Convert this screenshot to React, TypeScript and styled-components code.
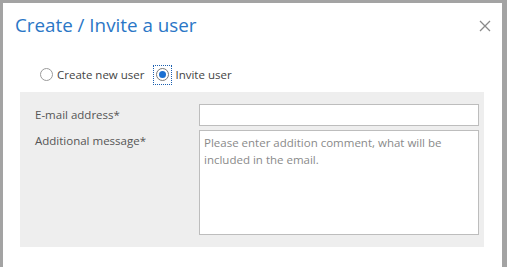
import { createGlobalStyle, styled } from "styled-components";

const GlobalStyle = createGlobalStyle`
    html, body {
        margin: 0;
        padding: 0;
        background: #a3a3a3;
        font-family: "Open Sans", "Noto Sans", sans-serif;
        overflow: hidden;
    }
`;

function App() {
    return (
        <StyledBackdrop>
            <GlobalStyle />
            <StyledDialog>
                <StyledHeader>
                    <StyledTitle>Create / Invite a user</StyledTitle>
                    <StyledClose aria-label="Close">
                        <svg width="12" height="12" viewBox="0 0 12 12">
                            <path d="M1 1 L11 11 M11 1 L1 11" stroke="#8a8a8a" strokeWidth="1.3" fill="none" />
                        </svg>
                    </StyledClose>
                </StyledHeader>
                <StyledRadioRow>
                    <StyledRadioOption>
                        <StyledRadio />
                        <span>Create new user</span>
                    </StyledRadioOption>
                    <StyledRadioOption>
                        <StyledFocus>
                            <StyledRadio $checked />
                        </StyledFocus>
                        <span>Invite user</span>
                    </StyledRadioOption>
                </StyledRadioRow>
                <StyledPanel>
                    <StyledFormRow>
                        <StyledLabel>E-mail address*</StyledLabel>
                        <StyledInput type="text" />
                    </StyledFormRow>
                    <StyledFormRow>
                        <StyledLabel>Additional message*</StyledLabel>
                        <StyledTextArea placeholder="Please enter addition comment, what will be included in the email." />
                    </StyledFormRow>
                </StyledPanel>
            </StyledDialog>
        </StyledBackdrop>
    );
}

const StyledBackdrop = styled.div`
    width: 507px;
    height: 267px;
    padding: 3px 5px 0 3px;
    box-sizing: border-box;
    background: #a3a3a3;
    overflow: hidden;
`;

const StyledDialog = styled.div`
    background: #ffffff;
    height: 264px;
    box-sizing: border-box;
    padding: 0 17px 0 17px;
`;

const StyledHeader = styled.div`
    display: flex;
    justify-content: space-between;
    align-items: center;
    height: 44px;
    margin-left: -5px;
    margin-right: -6px;
`;

const StyledTitle = styled.h1`
    margin: 0;
    font-size: 18.8px;
    font-weight: 400;
    color: #2a76c6;
`;

const StyledClose = styled.button`
    border: none;
    background: none;
    padding: 0;
    display: flex;
    margin-top: 1px;
`;

const StyledRadioRow = styled.div`
    display: flex;
    align-items: center;
    gap: 9px;
    padding: 13px 0 0 20px;
    height: 29px;
    font-size: 11.5px;
    color: #444;
`;

const StyledRadioOption = styled.label`
    display: flex;
    align-items: center;
    gap: 4px;
`;

const StyledFocus = styled.span`
    display: flex;
    padding: 2px 2px 3px 2px;
    outline: 1px dotted #1a5fb0;
    margin-left: 1px;
`;

const StyledRadio = styled.span<{ $checked?: boolean }>`
    width: 11px;
    height: 11px;
    border-radius: 50%;
    border: 1px solid ${(p) => (p.$checked ? "#7a7a7a" : "#9a9a9a")};
    background: #fff;
    display: flex;
    align-items: center;
    justify-content: center;

    &::after {
        content: "";
        width: 7px;
        height: 7px;
        border-radius: 50%;
        background: ${(p) => (p.$checked ? "#1a6fd1" : "transparent")};
    }
`;

const StyledPanel = styled.div`
    margin-top: 3px;
    background: #eeeeee;
    padding: 12px 5px 12px 15px;
    display: flex;
    flex-direction: column;
    gap: 4px;
    width: 464px;
    box-sizing: border-box;
`;

const StyledFormRow = styled.div`
    display: grid;
    grid-template-columns: 164px 280px;
    align-items: start;
`;

const StyledLabel = styled.span`
    font-size: 11.5px;
    color: #555;
    padding-top: 3px;
`;

const StyledInput = styled.input`
    box-sizing: border-box;
    width: 280px;
    height: 22px;
    border: 1px solid #bdbdbd;
    background: #fff;
    outline: none;
    margin: 0;
`;

const StyledTextArea = styled.textarea`
    box-sizing: border-box;
    width: 280px;
    height: 105px;
    border: 1px solid #bdbdbd;
    background: #fff;
    resize: none;
    margin: 0;
    padding: 3px 4px;
    font-family: "Open Sans", "Noto Sans", sans-serif;
    font-size: 11.5px;
    line-height: 17px;
    outline: none;

    &::placeholder {
        color: #8a8a8a;
        opacity: 1;
    }
`;

export default App;
